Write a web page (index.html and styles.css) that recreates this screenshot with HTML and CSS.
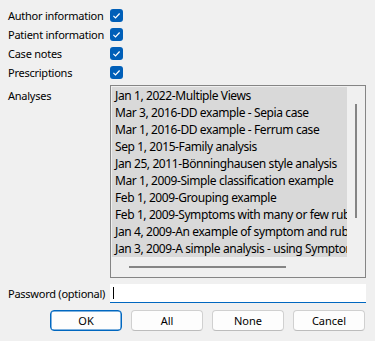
FILE: index.html
```html
<!DOCTYPE html>
<html lang="en">
<head>
    <meta charset="UTF-8">
    <meta name="viewport" content="width=device-width, initial-scale=1.0">
    <title>Export options</title>
    <link rel="stylesheet" href="styles.css">
</head>
<body>

    <div class="dialog">
        <div class="row check-row">
            <label>Author information</label>
            <span class="check"><svg width="13" height="13" viewBox="0 0 13 13"><rect width="13" height="13" rx="3" fill="#005fb8"/><path d="M3.4 6.9 L5.5 8.9 L9.6 4.5" fill="none" stroke="#fff" stroke-width="1.2"/></svg></span>
        </div>
        <div class="row check-row">
            <label>Patient information</label>
            <span class="check"><svg width="13" height="13" viewBox="0 0 13 13"><rect width="13" height="13" rx="3" fill="#005fb8"/><path d="M3.4 6.9 L5.5 8.9 L9.6 4.5" fill="none" stroke="#fff" stroke-width="1.2"/></svg></span>
        </div>
        <div class="row check-row">
            <label>Case notes</label>
            <span class="check"><svg width="13" height="13" viewBox="0 0 13 13"><rect width="13" height="13" rx="3" fill="#005fb8"/><path d="M3.4 6.9 L5.5 8.9 L9.6 4.5" fill="none" stroke="#fff" stroke-width="1.2"/></svg></span>
        </div>
        <div class="row check-row">
            <label>Prescriptions</label>
            <span class="check"><svg width="13" height="13" viewBox="0 0 13 13"><rect width="13" height="13" rx="3" fill="#005fb8"/><path d="M3.4 6.9 L5.5 8.9 L9.6 4.5" fill="none" stroke="#fff" stroke-width="1.2"/></svg></span>
        </div>

        <!-- Analyses list -->
        <div class="row list-row">
            <label>Analyses</label>
            <div class="listbox">
                <ul class="items">
                    <li>Jan 1, 2022-Multiple Views</li>
                    <li>Mar 3, 2016-DD example - Sepia case</li>
                    <li>Mar 1, 2016-DD example - Ferrum case</li>
                    <li>Sep 1, 2015-Family analysis</li>
                    <li>Jan 25, 2011-Bönninghausen style analysis</li>
                    <li>Mar 1, 2009-Simple classification example</li>
                    <li>Feb 1, 2009-Grouping example</li>
                    <li>Feb 1, 2009-Symptoms with many or few rubrics</li>
                    <li>Jan 4, 2009-An example of symptom and rubric</li>
                    <li>Jan 3, 2009-A simple analysis - using Symptoms</li>
                </ul>
                <div class="vscroll"><span class="vthumb"></span></div>
                <div class="hscroll"><span class="hthumb"></span></div>
            </div>
        </div>

        <div class="row pw-row">
            <label>Password (optional)</label>
            <div class="pw"><span class="caret"></span></div>
        </div>

        <div class="buttons">
            <button class="default">OK</button>
            <button>All</button>
            <button>None</button>
            <button>Cancel</button>
        </div>
    </div>

</body>
</html>
```

FILE: styles.css
```css
body {
    margin: 0;
    background-color: #f0f0f0;
    font-family: "Noto Sans", sans-serif;
    font-size: 11px;
    letter-spacing: -0.25px;
    color: #000;
}
.dialog {
    width: 375px;
    height: 341px;
    padding-top: 6px;
    box-sizing: border-box;
}
.row {
    display: flex;
}
.row label {
    width: 102px;
    padding-left: 8px;
    flex-shrink: 0;
    white-space: nowrap;
}
.check-row {
    height: 19px;
    align-items: center;
}
.check {
    display: flex;
}
.list-row {
    margin-top: 3px;
}
.list-row label {
    padding-top: 3px;
}
.listbox {
    width: 256px;
    height: 193px;
    box-sizing: border-box;
    border: 1px solid #858585;
    padding: 1px 0 0 1px;
    display: grid;
    grid-template-columns: 235px 18px;
    grid-template-rows: 170px 20px;
}
.items {
    list-style: none;
    margin: 0;
    padding: 0;
    background-color: #d9d9d9;
    overflow: hidden;
    font-size: 12px;
    letter-spacing: -0.4px;
}
.items li {
    height: 17px;
    line-height: 17px;
    padding-left: 3px;
    white-space: nowrap;
}
.vscroll {
    padding: 17px 0 0 8px;
}
.vthumb {
    display: block;
    width: 2px;
    height: 114px;
    background-color: #858585;
}
.hscroll {
    grid-column: 1 / 3;
    padding: 9px 0 0 17px;
}
.hthumb {
    display: block;
    width: 157px;
    height: 2px;
    background-color: #858585;
}
.pw-row {
    margin-top: 6px;
    height: 19px;
    align-items: center;
}
.pw {
    width: 256px;
    height: 19px;
    box-sizing: border-box;
    background-color: #fff;
    border-bottom: 1px solid #0067c0;
    padding: 3px 0 0 3px;
}
.caret {
    display: block;
    width: 1px;
    height: 12px;
    background-color: #000;
}
.buttons {
    display: flex;
    gap: 9px;
    margin-top: 7px;
    padding-left: 50px;
}
button {
    width: 72px;
    height: 21px;
    font-family: "Noto Sans", sans-serif;
    font-size: 11px;
    color: #000;
    background-color: #fdfdfd;
    border: 1px solid #d0d0d0;
    border-bottom-color: #bcbcbc;
    border-radius: 4px;
    padding: 0;
}
button.default {
    border: 1px solid #0067c0;
    box-shadow: inset 0 0 0 0.5px #0067c0;
}
```
